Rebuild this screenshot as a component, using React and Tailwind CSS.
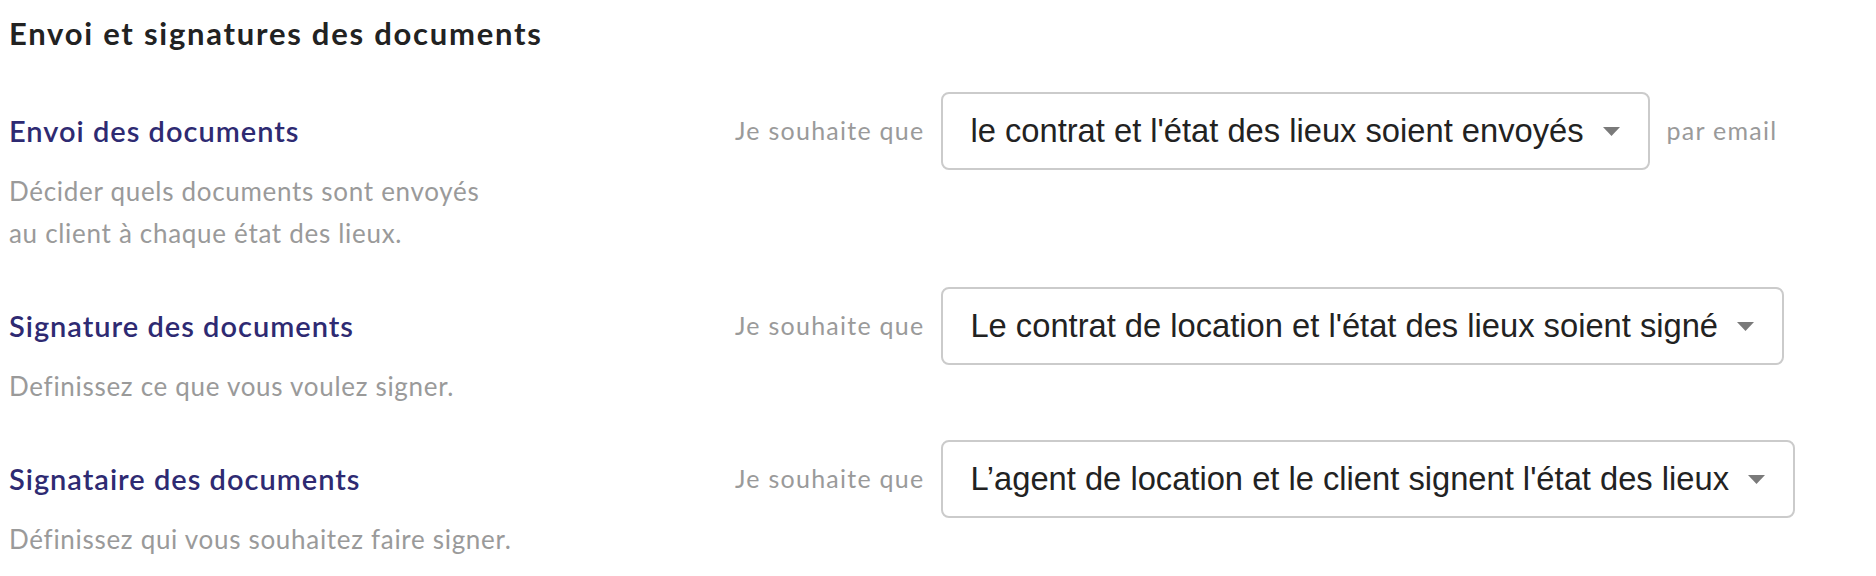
import { useState } from "react";

const rows = [
  {
    title: "Envoi des documents",
    desc: ["Décider quels documents sont envoyés", "au client à chaque état des lieux."],
    value: "le contrat et l'état des lieux soient envoyés",
    suffix: "par email",
  },
  {
    title: "Signature des documents",
    desc: ["Definissez ce que vous voulez signer."],
    value: "Le contrat de location et l'état des lieux soient signé",
  },
  {
    title: "Signataire des documents",
    desc: ["Définissez qui vous souhaitez faire signer."],
    value: "L’agent de location et le client signent l'état des lieux",
  },
];

function Select({ value }) {
  return (
    <button className="flex h-[78px] items-center rounded-[8px] border-2 border-[#cbcbcb] bg-white pl-[27px] pr-[28px] font-['Liberation_Sans',Arial,sans-serif] text-[32.7px] leading-[38px] text-[#222]">
      <span>{value}</span>
      <svg className="ml-[19px]" width="17" height="9" viewBox="0 0 17 9">
        <path d="M0 0h17L8.5 9z" fill="#7a7a7a" />
      </svg>
    </button>
  );
}

export default function App() {
  const [values] = useState(rows.map((r) => r.value));

  return (
    <div className="min-h-[576px] bg-white pl-[9px] pt-[12px] font-['Lato',sans-serif]">
      <h1 className="text-[31px] font-bold leading-[42px] tracking-[1.75px] text-[#222]">
        Envoi et signatures des documents
      </h1>
      <div className="mt-[38px] flex flex-col gap-[33px]">
        {rows.map((row, i) => (
          <div key={row.title} className="flex items-start">
            <div className="w-[726px] shrink-0">
              <h2 className="flex h-[78px] items-center text-[29px] font-semibold tracking-[1px] text-[#2e2a72]">
                {row.title}
              </h2>
              {row.desc.map((line) => (
                <p key={line} className="text-[26px] leading-[42px] tracking-[0.7px] text-[#9a9a9a]">
                  {line}
                </p>
              ))}
            </div>
            <div className="flex items-center gap-[17px]">
              <span className="text-[25px] tracking-[1.25px] text-[#9a9a9a]">Je souhaite que</span>
              <Select value={values[i]} />
              {row.suffix && (
                <span className="text-[25px] tracking-[1.25px] text-[#9a9a9a]">{row.suffix}</span>
              )}
            </div>
          </div>
        ))}
      </div>
    </div>
  );
}
